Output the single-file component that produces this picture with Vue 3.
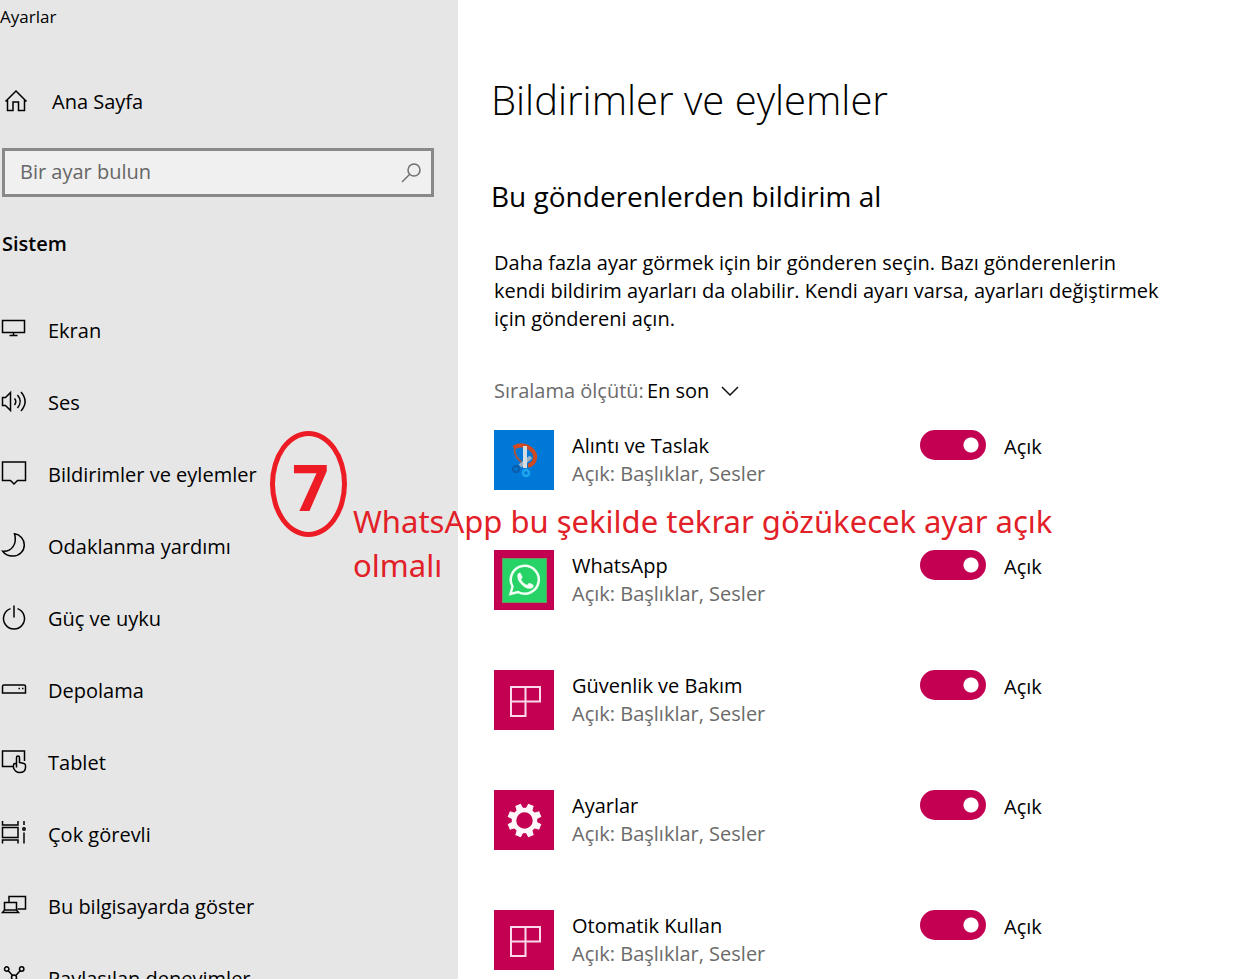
<script setup>
import { ref } from 'vue'

const query = ref('')
const sort = ref('recent')

const navItems = [
  { label: 'Ekran', paths: ['M2.5 4.5h22v12h-22z', 'M13.5 16.5v3', 'M9.5 19.5h8'] },
  {
    label: 'Ses',
    paths: [
      'M2.5 9.5h3l5-5v18l-5-5h-3z',
      'M14.5 10.5q2.6 3 0 6.5',
      'M17.5 7q5.4 6.5 0 13',
      'M21 4q8.2 9.5 0 19',
    ],
  },
  { label: 'Bildirimler ve eylemler', paths: ['M2.5 2h23v18.5h-8l-3.5 3.5-3.5-3.5h-8z'] },
  {
    label: 'Odaklanma yardımı',
    paths: ['M14.5 1.8C20 2.5 24.3 7 24.3 13A11 11 0 0 1 13.3 24C8.5 24.2 4.7 22 2.7 19.2C11.5 20 17.5 12 14.5 1.8z'],
  },
  { label: 'Güç ve uyku', paths: ['M10.5 4.6a10.5 10.5 0 1 0 7 0', 'M14 1.5v12'] },
  { label: 'Depolama', paths: ['M4 9h20q1.5 0 1.5 1.5v6.5h-23v-6.5Q2.5 9 4 9z', 'M18.5 12.5h1.5', 'M22 12.5h1.5'] },
  {
    label: 'Tablet',
    paths: [
      'M13 18.5H2.5v-15.5h22v10',
      'M16.5 19.5V9.5q0-1.5 1.5-1.5t1.5 1.5v5l4.500 1q1.500.4 1.500 2v2q0 5-6 5-4 0-6-4.500v-3q0-1.500 1.500-1.500t1.500 1.500',
    ],
  },
  {
    label: 'Çok görevli',
    paths: ['M2.5 1v4h15.5v-4', 'M2.5 7.5h15.5v10h-15.5z', 'M2.5 23.5v-3.5h15.5v3.5', 'M24 1v4', 'M24 12.5v11', 'M22.8 9a1.200 1.200 0 1 0 2.400 0a1.200 1.200 0 1 0-2.400 0z'],
  },
  {
    label: 'Bu bilgisayarda göster',
    paths: ['M9 10.5v-6h16.5v12.5h-8', 'M4.5 18v-7.5h12v7.5', 'M4.5 18h12l2 2.5h-16z'],
  },
  {
    label: 'Paylaşılan deneyimler',
    paths: [
      'M4.5 5a2.2 2.2 0 1 0 4.4 0a2.2 2.2 0 1 0-4.4 0',
      'M19.5 5a2.2 2.2 0 1 0 4.4 0a2.2 2.2 0 1 0-4.4 0',
      'M11.5 13.5a2.5 2.5 0 1 0 5 0a2.5 2.5 0 1 0-5 0',
      'M8.3 6.8l4 4.5', 'M20.1 6.8l-4 4.5', 'M12 15.5l-5 5', 'M16 15.5l5 5',
    ],
  },
]

const senders = ref([
  { name: 'Alıntı ve Taslak', icon: 'snip', on: true },
  { name: 'WhatsApp', icon: 'whatsapp', on: true },
  { name: 'Güvenlik ve Bakım', icon: 'tiles', on: true },
  { name: 'Ayarlar', icon: 'gear', on: true },
  { name: 'Otomatik Kullan', icon: 'tiles', on: true },
])

const teeth = [22.5, 67.5, 112.5, 157.5, 202.5, 247.5, 292.5, 337.5]
</script>

<template>
  <div class="settings">
    <aside class="sidebar">
      <div class="window-title">Ayarlar</div>
      <a class="home" href="#">
        <svg class="icon" viewBox="0 0 28 28" aria-hidden="true">
          <path d="M5.5 14.5L16 4l10.5 10.5M7.5 12.5v11h5.5v-8.5h5.5v8.5h6v-11" />
        </svg>
        <span>Ana Sayfa</span>
      </a>
      <div class="search">
        <input v-model="query" type="search" placeholder="Bir ayar bulun" aria-label="Bir ayar bulun" />
        <button type="button" aria-label="Ara">
          <svg viewBox="0 0 22 22" aria-hidden="true">
            <circle cx="14" cy="8" r="6" />
            <path d="M9.5 12.5L2 20" />
          </svg>
        </button>
      </div>
      <h2 class="group">Sistem</h2>
      <nav>
        <a v-for="item in navItems" :key="item.label" class="nav-item" href="#">
          <svg class="icon" viewBox="0 0 28 28" aria-hidden="true">
            <path v-for="d in item.paths" :key="d" :d="d" />
          </svg>
          <span>{{ item.label }}</span>
        </a>
      </nav>
    </aside>

    <main class="content">
      <h1>Bildirimler ve eylemler</h1>
      <h2 class="section">Bu gönderenlerden bildirim al</h2>
      <p class="intro">
        Daha fazla ayar görmek için bir gönderen seçin. Bazı gönderenlerin kendi bildirim ayarları da
        olabilir. Kendi ayarı varsa, ayarları değiştirmek için göndereni açın.
      </p>
      <div class="sort">
        <label for="sort">Sıralama ölçütü:</label>
        <select id="sort" v-model="sort">
          <option value="recent">En son</option>
          <option value="name">Ad</option>
        </select>
        <svg viewBox="0 0 18 10" aria-hidden="true"><path d="M1 1l8 8 8-8" /></svg>
      </div>

      <ul class="senders">
        <li v-for="(sender, i) in senders" :key="sender.name">
          <svg class="tile" viewBox="0 0 60 60" aria-hidden="true">
            <g v-if="sender.icon === 'snip'" fill="none">
              <rect width="60" height="60" fill="#0078d7" />
              <path d="M19.5 17.5q9-4.5 16 .5 7 5 5.500 11-2 6-7 6.500" stroke="#cf4a22" stroke-width="4" />
              <path d="M20.5 19q0 8 7 13" stroke="#a9553f" stroke-width="2" />
              <circle cx="22" cy="39" r="3" stroke="#0b5fae" stroke-width="2.5" />
              <path d="M26 36l11-9" stroke="#9fb2c2" stroke-width="4" />
              <path d="M31 16v22" stroke="#d5dce2" stroke-width="4" />
              <circle cx="32" cy="43" r="3" stroke="#1fa6ee" stroke-width="2.5" />
            </g>
            <g v-else-if="sender.icon === 'whatsapp'">
              <rect width="60" height="60" fill="#c30052" />
              <rect x="8.5" y="8.5" width="44" height="44" fill="#27d366" stroke="#6a9c5c" />
              <path d="M16.5 44l2-7.5a14 14 0 1 1 5.5 5.5z" fill="none" stroke="#f2fff4" stroke-width="2.5" />
              <path d="M23.5 24.5q1-2.5 3-1.5l2 4q0 1-1.5 2.5 2 4 6 5.5l2-2q1-.5 4.5 2 .5 2.5-2.5 3.5-4 1.500-9.500-4-5-5-4-10z" fill="#f2fff4" />
            </g>
            <g v-else-if="sender.icon === 'tiles'">
              <rect width="60" height="60" fill="#c30052" />
              <path d="M17 17h29v14.5h-29zM31.5 17v29h-14.5v-15" fill="none" stroke="#fbd9ea" stroke-width="2" />
            </g>
            <g v-else>
              <rect width="60" height="60" fill="#c30052" />
              <path
                v-for="a in teeth"
                :key="a"
                :transform="`rotate(${a} 30.5 30.5)`"
                d="M27.5 19l.5-5h5l.5 5z"
                fill="#fff6fa"
                stroke="#fff6fa"
              />
              <circle cx="30.5" cy="30.5" r="10.5" fill="none" stroke="#fff6fa" stroke-width="4.5" />
            </g>
          </svg>
          <div class="text">
            <div class="name">{{ sender.name }}</div>
            <div class="detail">Açık: Başlıklar, Sesler</div>
          </div>
          <div class="switch">
            <input :id="`switch-${i}`" v-model="sender.on" type="checkbox" role="switch" />
            <label :for="`switch-${i}`">{{ sender.on ? 'Açık' : 'Kapalı' }}</label>
          </div>
        </li>
      </ul>
    </main>

    <div class="step">7</div>
    <p class="note">WhatsApp bu şekilde tekrar gözükecek ayar açık olmalı</p>
  </div>
</template>

<style>
body {
  background: #fff;
}
</style>

<style scoped>
.settings {
  position: relative;
  display: grid;
  grid-template-columns: 458px 1fr;
  height: 100vh;
  overflow: hidden;
  color: #000;
  font: 20px/28px "Open Sans", "Noto Sans", sans-serif;
}
h1, h2, p, ul {
  margin: 0;
  padding: 0;
  font-weight: 400;
}
a {
  color: inherit;
  text-decoration: none;
}
.sidebar {
  background: #e6e6e6;
  overflow: hidden;
}
.window-title {
  font-size: 17px;
  line-height: 34px;
}
.icon {
  flex: none;
  width: 28px;
  height: 28px;
  fill: none;
  stroke: #000;
  stroke-width: 1.5px;
}
.home {
  display: flex;
  align-items: center;
  gap: 24px;
  height: 48px;
  margin-top: 43px;
}
.home span,
.nav-item span {
  padding-top: 2px;
}
.search {
  display: flex;
  box-sizing: border-box;
  height: 49px;
  margin: 23px 24px 0 2px;
  border: 3px solid #898989;
  background: #f0f0f0;
}
.search input {
  flex: 1;
  min-width: 0;
  padding: 0 0 2px 15px;
  border: 0;
  outline: 0;
  background: none;
  font: inherit;
}
.search input::placeholder {
  color: #666;
  opacity: 1;
}
.search button {
  padding: 0 9px;
  border: 0;
  background: none;
}
.search svg {
  display: block;
  width: 22px;
  height: 22px;
  fill: none;
  stroke: #707070;
  stroke-width: 1.5px;
}
.group {
  margin: 33px 0 36px 2px;
  font-size: 20px;
  font-weight: 600;
}
.nav-item {
  display: flex;
  align-items: center;
  gap: 20px;
  height: 72px;
}
.content {
  padding: 70px 36px 0;
  overflow: hidden;
}
h1 {
  margin-left: -3px;
  font-size: 40px;
  font-weight: 350;
  line-height: 60px;
}
.section {
  margin: 46px 0 33px -3px;
  font-size: 28px;
  line-height: 40px;
}
.intro {
  max-width: 670px;
}
.sort {
  display: flex;
  align-items: center;
  height: 28px;
  margin-top: 44px;
}
.sort label {
  color: #6b6b6b;
}
.sort select {
  appearance: none;
  width: 74px;
  margin-left: 3px;
  padding: 0;
  border: 0;
  background: none;
  color: #000;
  font: inherit;
}
.sort svg {
  width: 18px;
  height: 10px;
  fill: none;
  stroke: #111;
  stroke-width: 1.5px;
}
.senders {
  margin-top: 25px;
  list-style: none;
}
.senders li {
  display: grid;
  grid-template-columns: 60px 330px 1fr;
  column-gap: 18px;
  align-items: start;
  height: 120px;
}
.tile {
  width: 60px;
  height: 60px;
}
.text {
  padding-top: 2px;
}
.detail {
  color: #6b6b6b;
}
.switch {
  display: flex;
  gap: 18px;
}
.switch input {
  appearance: none;
  box-sizing: border-box;
  width: 66px;
  height: 30px;
  margin: 0;
  border-radius: 15px;
  background: radial-gradient(circle at 51px 15px, #fff 7px, #c30052 8px);
}
.switch input:not(:checked) {
  background: radial-gradient(circle at 15px 15px, #fff 7px, #777 8px);
}
.switch label {
  padding-top: 3px;
}
.step {
  position: absolute;
  left: 270px;
  top: 431px;
  box-sizing: border-box;
  width: 77px;
  height: 106px;
  padding-left: 4px;
  border: 5px solid #ed1c24;
  border-radius: 50%;
  color: #ed1c24;
  font: 700 64px/102px "Open Sans", sans-serif;
  text-align: center;
}
.note {
  position: absolute;
  left: 353px;
  top: 499px;
  width: 720px;
  color: #e22027;
  font: 31px/44px "Noto Sans", sans-serif;
}
</style>
